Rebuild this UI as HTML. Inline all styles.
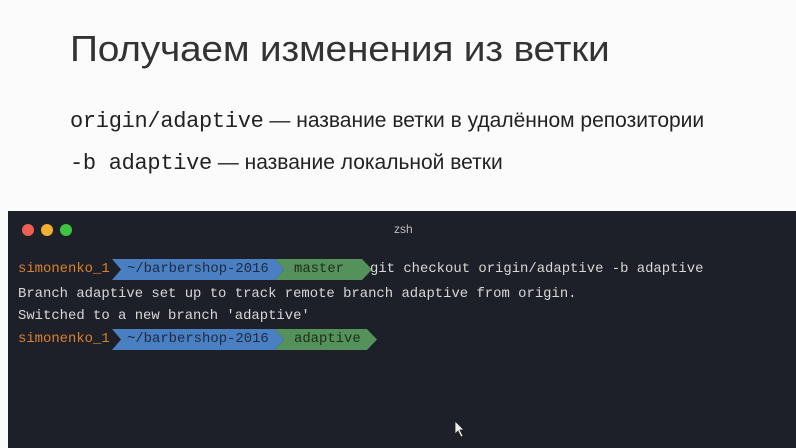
<!DOCTYPE html><html><head><style>
body{margin:0;width:796px;height:448px;background:#fbfbfb;position:relative;overflow:hidden;font-family:"Liberation Sans",sans-serif}
.t{position:absolute;left:70px;top:28px;font-size:36px;color:#333;letter-spacing:-0.2px;transform:scaleX(1.08);transform-origin:left}
.l{position:absolute;left:70px;font-size:21px;color:#222;white-space:nowrap}
.m{font-family:"Liberation Mono",monospace;font-size:22px;letter-spacing:-0.3px}
.term{position:absolute;left:8px;top:211px;width:788px;height:237px;background:#1e2029}
.d{position:absolute;top:224px;width:12px;height:12px;border-radius:50%}
.row{position:absolute;left:18px;font-family:"Liberation Mono",monospace;font-size:13.9px;color:#d8d8d8;white-space:pre;height:20px;line-height:20px}
.o{color:#d9822b}
</style></head><body>
<div class="t">Получаем изменения из ветки</div>
<div class="l" style="top:109px"><span class="m">origin/adaptive</span> — название ветки в удалённом репозитории</div>
<div class="l" style="top:151px"><span class="m">-b adaptive</span> — название локальной ветки</div>
<div class="term"></div>
<div class="d" style="left:22px;background:#ed5e57"></div>
<div class="d" style="left:41px;background:#f3b030"></div>
<div class="d" style="left:60px;background:#3ec440"></div>
<div style="position:absolute;left:394px;top:222px;color:#bbb;font-size:12px;font-family:'Liberation Sans',sans-serif">zsh</div>

<svg style="position:absolute;left:0;top:0" width="796" height="448">
<polygon points="112,259 275,259 284,269.5 275,280 112,280 121,269.5" fill="#4a7fc1"/>
<polygon points="275,259 362,259 372,269.5 362,280 275,280 284,269.5" fill="#55915a"/>
<polygon points="112,329 275,329 284,339.5 275,350 112,350 121,339.5" fill="#4a7fc1"/>
<polygon points="275,329 367,329 377,339.5 367,350 275,350 284,339.5" fill="#55915a"/>
<path d="M455 421 L455 434 L458 431 L461 437 L463 436 L460 430 L464 430 Z" fill="#eee" stroke="#222" stroke-width="0.8"/>
</svg>
<div class="row" style="top:259px"><span class="o">simonenko_1</span></div>
<div class="row" style="top:259px;left:127px;color:#1c2a44">~/barbershop-2016</div>
<div class="row" style="top:259px;left:294px;color:#1b2e1c">master</div>
<div class="row" style="top:259px;left:370px">git checkout origin/adaptive -b adaptive</div>
<div class="row" style="top:284px">Branch adaptive set up to track remote branch adaptive from origin.</div>
<div class="row" style="top:306px">Switched to a new branch 'adaptive'</div>
<div class="row" style="top:329px"><span class="o">simonenko_1</span></div>
<div class="row" style="top:329px;left:127px;color:#1c2a44">~/barbershop-2016</div>
<div class="row" style="top:329px;left:294px;color:#1b2e1c">adaptive</div>
</body></html>
